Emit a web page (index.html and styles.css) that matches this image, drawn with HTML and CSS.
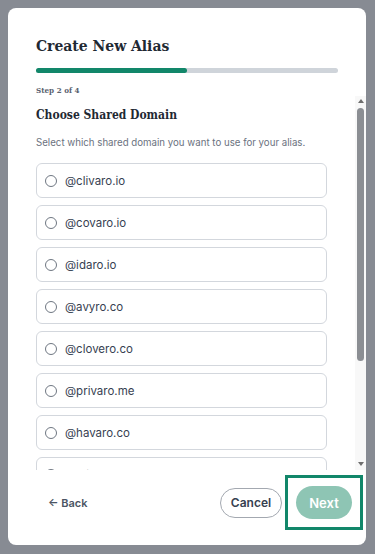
FILE: index.html
```html
<!DOCTYPE html>
<html lang="en">
<head>
    <meta charset="utf-8">
    <meta name="viewport" content="width=device-width, initial-scale=1">
    <title>Create New Alias</title>
    <link rel="stylesheet" href="styles.css">
</head>
<body>
    <div class="modal">

        <!-- Header with progress -->
        <div class="header">
            <h1>Create New Alias</h1>
            <div class="progress"><div class="progress-fill"></div></div>
            <p class="step">Step 2 of 4</p>
        </div>

        <!-- Scrollable list of domains -->
        <div class="list-wrap">
            <div class="list">
                <h2>Choose Shared Domain</h2>
                <p class="desc">Select which shared domain you want to use for your alias.</p>

                <label class="option"><input type="radio" name="domain"><span>@clivaro.io</span></label>
                <label class="option"><input type="radio" name="domain"><span>@covaro.io</span></label>
                <label class="option"><input type="radio" name="domain"><span>@idaro.io</span></label>
                <label class="option"><input type="radio" name="domain"><span>@avyro.co</span></label>
                <label class="option"><input type="radio" name="domain"><span>@clovero.co</span></label>
                <label class="option"><input type="radio" name="domain"><span>@privaro.me</span></label>
                <label class="option"><input type="radio" name="domain"><span>@havaro.co</span></label>
                <label class="option"><input type="radio" name="domain"><span>@mivaro.net</span></label>
                <label class="option"><input type="radio" name="domain"><span>@zentaro.io</span></label>
                <label class="option"><input type="radio" name="domain"><span>@nuvaro.co</span></label>
            </div>

            <!-- Scrollbar -->
            <div class="scrollbar">
                <div class="arrow-up"></div>
                <div class="thumb"></div>
                <div class="arrow-down"></div>
            </div>
        </div>

        <!-- Footer buttons -->
        <div class="footer">
            <span class="back">&larr; Back</span>
            <div class="actions">
                <button class="cancel">Cancel</button>
                <span class="focus-ring"><button class="next">Next</button></span>
            </div>
        </div>

    </div>
</body>
</html>
```

FILE: styles.css
```css
body {
    margin: 0;
    background-color: #878b93;
    font-family: Inter, "Liberation Sans", sans-serif;
}

.modal {
    margin: 8px;
    width: 358px;
    height: 537px;
    background-color: white;
    border-radius: 8px;
    display: flex;
    flex-direction: column;
    overflow: hidden;
}

/* Header */
.header {
    padding: 28px 28px 0 28px;
}

h1 {
    margin: 0;
    font-family: "DejaVu Serif", serif;
    font-stretch: condensed;
    font-size: 15.5px;
    line-height: 20px;
    color: #1f2933;
}

.progress {
    margin-top: 12px;
    height: 5px;
    border-radius: 3px;
    background-color: #cfd4da;
}

.progress-fill {
    width: 50%;
    height: 100%;
    border-radius: 3px;
    background-color: #12876a;
}

.step {
    margin: 11px 0 0 0;
    font-family: "DejaVu Serif", serif;
    font-stretch: condensed;
    font-weight: bold;
    font-size: 8px;
    line-height: 12px;
    color: #5a6270;
}

/* List */
.list-wrap {
    flex: 1;
    min-height: 0;
    display: flex;
}

.list {
    flex: 1;
    overflow-y: auto;
    scrollbar-width: none;
    padding: 10px 28px 0 28px;
}

h2 {
    margin: 0;
    font-family: "DejaVu Serif", serif;
    font-stretch: condensed;
    font-size: 12px;
    line-height: 18px;
    color: #1f2933;
}

.desc {
    margin: 12px 0 13px 0;
    font-size: 9.7px;
    line-height: 14px;
    color: #6b7280;
}

.option {
    display: flex;
    align-items: center;
    gap: 8px;
    height: 35px;
    box-sizing: border-box;
    margin-bottom: 7px;
    padding-left: 8px;
    border: 1px solid #d3d7dd;
    border-radius: 6px;
    font-size: 11.5px;
    color: #374151;
}

.option input {
    appearance: none;
    margin: 0;
    width: 12px;
    height: 12px;
    border: 1px solid #6f7782;
    border-radius: 50%;
}

/* Scrollbar */
.scrollbar {
    width: 11px;
    background-color: #f8f8f8;
    display: flex;
    flex-direction: column;
    align-items: center;
}

.arrow-up {
    margin-top: 3px;
    border-left: 3px solid transparent;
    border-right: 3px solid transparent;
    border-bottom: 4px solid #6e6e6e;
}

.thumb {
    margin-top: 5px;
    width: 7px;
    height: 253px;
    border-radius: 4px;
    background-color: #8b8e93;
}

.arrow-down {
    margin-top: auto;
    margin-bottom: 4px;
    border-left: 3px solid transparent;
    border-right: 3px solid transparent;
    border-top: 4px solid #6e6e6e;
}

/* Footer */
.footer {
    height: 75px;
    flex-shrink: 0;
    display: flex;
    align-items: center;
    justify-content: space-between;
    padding: 0 3px 10px 40px;
    box-sizing: border-box;
}

.back {
    font-size: 11px;
    font-weight: 600;
    color: #4b5563;
}

.actions {
    display: flex;
    align-items: center;
    gap: 3px;
}

button {
    font-family: Inter, "Liberation Sans", sans-serif;
    font-weight: 600;
    cursor: pointer;
}

.cancel {
    width: 62px;
    height: 30px;
    border: 1px solid #a3a8b0;
    border-radius: 15px;
    background-color: white;
    font-size: 12px;
    color: #374151;
}

.focus-ring {
    display: flex;
    padding: 8px 8px;
    border: 3px solid #12876a;
}

.next {
    width: 56px;
    height: 33px;
    border: none;
    border-radius: 17px;
    background-color: #8ec5b4;
    font-size: 13px;
    color: white;
}
```
